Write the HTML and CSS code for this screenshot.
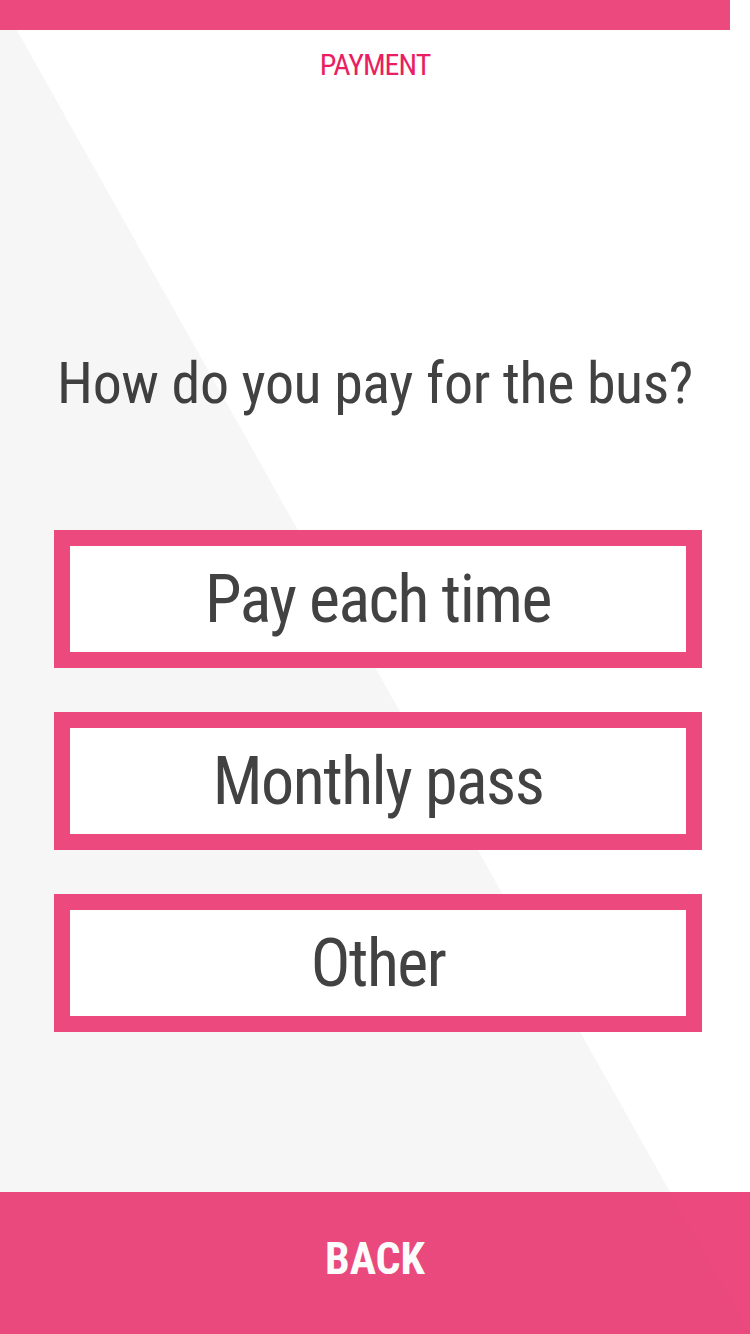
FILE: index.html
```html
<!DOCTYPE html>
<html lang="en">
<head>
<meta charset="utf-8">
<title>Payment</title>
<link rel="stylesheet" href="styles.css">
</head>
<body>
<div class="screen">
  <div class="topbar"></div>
  <div class="step">PAYMENT</div>
  <h1 class="question">How do you pay for the bus?</h1>
  <div class="options">
    <button class="option">Pay each time</button>
    <button class="option">Monthly pass</button>
    <button class="option">Other</button>
  </div>
  <button class="back">BACK</button>
</div>
</body>
</html>
```
FILE: styles.css
```css
html, body {
  margin: 0;
  padding: 0;
  background: #ffffff;
}
.screen {
  position: relative;
  width: 750px;
  height: 1334px;
  overflow: hidden;
  display: flex;
  flex-direction: column;
  font-family: "Roboto Condensed", "Roboto", sans-serif;
  font-stretch: condensed;
  color: #424242;
}
.screen::before {
  content: "";
  position: absolute;
  inset: 0;
  background: rgba(0, 0, 0, 0.035);
  clip-path: polygon(0 0, 750px 1334px, 0 1334px);
  z-index: 1;
  pointer-events: none;
}
.topbar {
  width: 730px;
  height: 30px;
  background: #ec4a7e;
  flex: none;
  position: relative;
  z-index: 2;
}
.step {
  margin-top: 15px;
  text-align: center;
  font-size: 30px;
  line-height: 40px;
  letter-spacing: -1px;
  color: #e91e63;
}
.question {
  margin: 262px 0 0;
  text-align: center;
  font-weight: normal;
  font-size: 58px;
  line-height: 72px;
  letter-spacing: -0.4px;
  color: #424242;
  white-space: nowrap;
}
.options {
  position: relative;
  z-index: 2;
  margin-top: 111px;
  padding-left: 6px;
  display: flex;
  flex-direction: column;
  align-items: center;
  gap: 44px;
}
.option {
  box-sizing: border-box;
  width: 648px;
  height: 138px;
  border: 16px solid #ec4a7e;
  background: #ffffff;
  font-family: inherit;
  font-stretch: inherit;
  font-size: 66px;
  letter-spacing: -1.5px;
  color: #424242;
  padding: 0;
  margin: 0;
}
.back {
  position: relative;
  z-index: 2;
  margin-top: auto;
  height: 142px;
  width: 100%;
  border: 0;
  background: #ec4a7e;
  color: #ffffff;
  font-family: inherit;
  font-stretch: inherit;
  font-weight: bold;
  font-size: 44px;
  padding: 0 0 9px;
}
.back::before {
  content: "";
  position: absolute;
  inset: 0;
  background: rgba(0, 0, 0, 0.012);
  clip-path: polygon(0 0, 670px 0, 750px 142px, 0 142px);
}
```
